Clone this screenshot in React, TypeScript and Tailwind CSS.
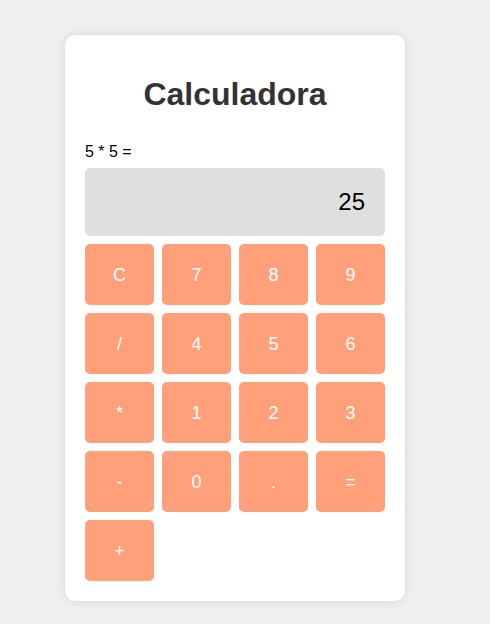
const keys = ["C", "7", "8", "9", "/", "4", "5", "6", "*", "1", "2", "3", "-", "0", ".", "=", "+"];

export default function App() {
  return (
    <div className="min-h-[624px] w-full bg-[#efefef] pt-[35px] pl-[65px] font-['Liberation_Sans',Arial,sans-serif]">
      <div className="w-[340px] rounded-[10px] bg-white p-5 shadow-[0_0_10px_rgba(0,0,0,0.1)]">
        <h1 className="my-[21px] text-center text-[32px] font-bold leading-[37px] text-[#333]">Calculadora</h1>
        <div className="mt-[30px] mb-[7px] text-base leading-[18px] text-black">5 * 5 =</div>
        <div className="mb-2 rounded-[5px] bg-[#dfdfdf] p-5 text-right text-2xl leading-[28px] text-black">25</div>
        <div className="grid grid-cols-4 gap-2">
          {keys.map((k) => (
            <button
              key={k}
              className="h-[61px] rounded-[5px] bg-[#ffa07a] text-lg text-white"
            >
              {k}
            </button>
          ))}
        </div>
      </div>
    </div>
  );
}
